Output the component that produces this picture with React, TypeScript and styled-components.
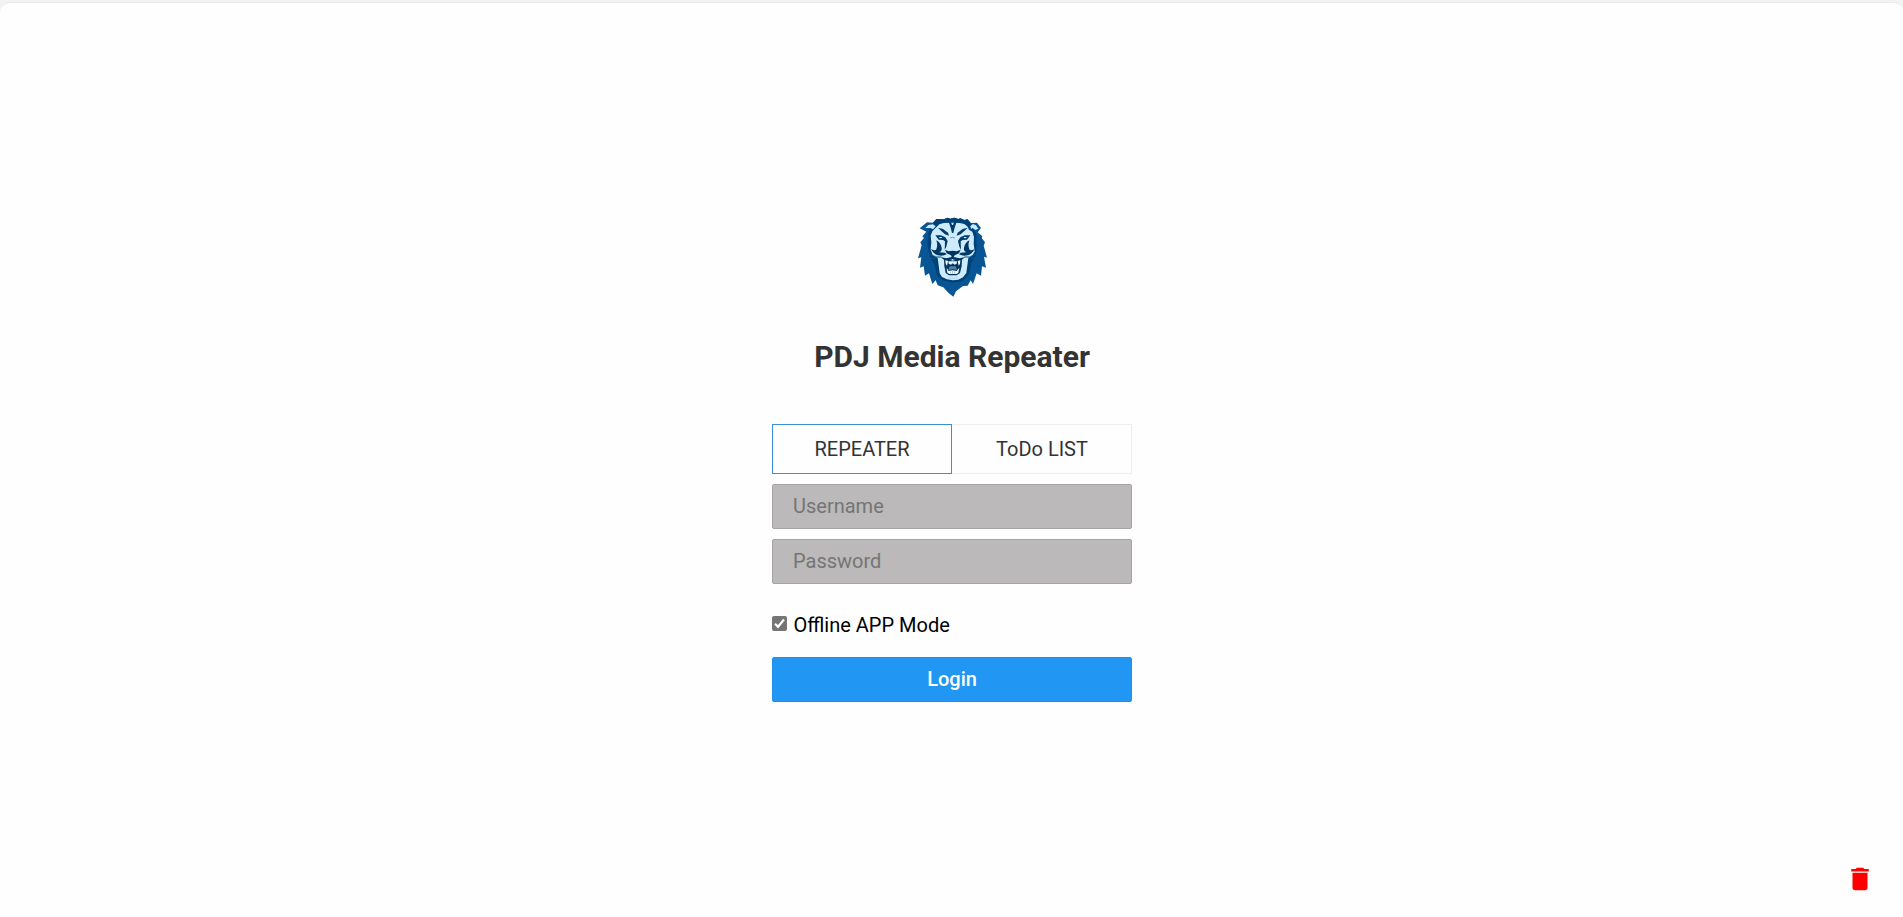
import React, { useState } from 'react';
import styled, { createGlobalStyle } from 'styled-components';

const GlobalStyle = createGlobalStyle`
  * { box-sizing: border-box; }
  body { margin: 0; background: #f3f3f3; font-family: Roboto, "Liberation Sans", sans-serif; }
`;

const Page = styled.main`
  height: 100vh;
  padding-top: 2px;
  overflow: hidden;
`;

const Card = styled.section`
  height: 100%;
  display: flex;
  flex-direction: column;
  align-items: center;
  padding: 202px 0 0;
  margin-right: -1px;
  padding-right: 1px;
  background: #fefefe;
  border-top: 1px solid #ebebeb;
  border-radius: 10px 10px 0 0;
`;

const Column = styled.form`
  width: 360px;
  margin-right: -1px;
  display: flex;
  flex-direction: column;
`;

const Logo = styled.svg`
  width: 94px;
  height: 100px;
  align-self: center;
`;

const Title = styled.h1`
  margin: 34px 0 0;
  height: 35px;
  font-size: 30px;
  line-height: 35px;
  font-weight: 700;
  color: #333;
  text-align: center;
`;

const Tabs = styled.div`
  display: flex;
  margin: 50px 0 10px;
`;

const Tab = styled.button<{ $active: boolean }>`
  flex: 1;
  height: 50px;
  padding: 0;
  border: 1px solid ${(p) => (p.$active ? '#3a8fd0' : '#eee')};
  ${(p) => !p.$active && 'border-left-color: transparent;'}
  background: transparent;
  color: #333;
  font: 400 20px/24px Roboto, sans-serif;
`;

const Field = styled.input`
  height: 45px;
  margin-bottom: 10px;
  padding: 0 20px 1.6px;
  border: 1px solid #a5a4a4;
  border-radius: 2px;
  background: #bbb9ba;
  color: #333;
  font: 400 20px/24px Roboto, sans-serif;
  outline: none;
  &::placeholder { color: #757575; }
`;

const Option = styled.label`
  display: flex;
  align-items: flex-start;
  height: 35px;
  margin: 20px 0 8px;
  padding-top: 2px;
  color: #000;
  font-size: 20px;
  line-height: 19px;
`;

const Check = styled.button<{ $on: boolean }>`
  width: 15px;
  height: 15px;
  margin: 0 6.5px 0 0;
  padding: 0;
  border: 0;
  border-radius: 2px;
  background: ${(p) => (p.$on ? '#757575' : '#ccc')};
  display: flex;
`;

const Submit = styled.button`
  height: 45px;
  padding: 0 0 1.6px;
  border: 1px solid #2190ec;
  border-radius: 2px;
  background: #2196f3;
  color: #fff;
  font: 500 20px/24px Roboto, sans-serif;
`;

const Trash = styled.button`
  position: fixed;
  right: 28px;
  bottom: 23px;
  width: 30px;
  height: 30px;
  padding: 0;
  border: 0;
  background: none;
  color: #f00;
  svg { display: block; }
`;

const Lion = () => (
  <Logo viewBox="0 0 282 300" aria-label="Lion">
    <path
      fill="#075594"
      d="M44 70L66 52L83 53L94 42L116 43L128 38L136 41L148 38L160 42L166 40L178 45L188 43L198 54L216 53L228 69L218 82L232 94L230 99L240 112L236 122L246 158L237 155L243 188L231 184L228 212L215 205L204 237L197 226L188 242L174 243L153 259L145 275L130 263L115 247L98 241L92 226L82 237L72 205L60 212L56 184L45 188L49 157L39 160L50 121L46 112L57 99L52 94L64 80Z"
    />
    <path
      fill="#004278"
      d="M76 66L94 42L116 43L128 38L136 41L148 38L160 42L166 40L178 45L188 43L200 62L214 86L215 116L213 150L200 171L192 208L173 228L145 233L112 226L97 212L88 178L74 154L67 116L70 84Z"
    />
    <path fill="#c9e9fb" d="M61 69L70 60L84 58L92 64L84 73L76 69Z" />
    <path fill="#c9e9fb" d="M196 63L204 57L213 61L220 71L211 75L203 69L198 72Z" />
    <path
      fill="#cdebfb"
      d="M94 67L103 58L116 54L142 53L164 54L178 57L188 65L192 74L202 80L207 96L206 116L209 140L202 151L190 158L184 204L174 217L160 224L143 226L126 223L111 216L104 205L98 158L83 150L77 134L79 112L77 92L82 79Z"
    />
    <path fill="#003c69" d="M131 50L138 52L141 60L144 60L147 52L155 50L149 68L145 84L141 84L137 68Z" />
    <path fill="#003c69" d="M99 68L114 72L129 83L132 92L120 88L109 78ZM188 68L173 72L158 83L155 92L167 88L178 78Z" />
    <path
      fill="#003c69"
      d="M91 91L108 91L121 97L128 108L124 125L119 134L120 109L114 105L101 104ZM196 91L179 91L166 97L159 108L163 125L168 134L167 109L173 105L186 104Z"
    />
    <path fill="#d2edfd" d="M101 96L111 96L110 99L105 100ZM186 96L176 96L177 99L182 100Z" />
    <path
      fill="#003865"
      d="M94 106Q107 113 110 128Q112 139 103 142L120 143L125 148Q113 155 99 151Q85 147 78 132Q91 139 94 133Q99 121 94 106ZM193 106Q180 113 177 128Q175 139 184 142L167 143L162 148Q174 155 188 151Q202 147 209 132Q196 139 193 133Q188 121 193 106Z"
    />
    <path
      fill="#00345f"
      d="M120 134L131 139L143 137L155 139L167 134L162 145L149 151L146 156L164 160L181 156L169 166L146 164L143 162L139 164L119 166L106 156L124 160L140 156L138 151L125 145Z"
    />
    <path fill="none" stroke="#3b7eaa" strokeWidth="2" d="M135 99L142 97L150 99" />
    <path
      fill="none"
      stroke="#1b6293"
      strokeWidth="1.8"
      d="M69 147L90 154L108 155M72 160L91 159L110 156M217 147L197 154L179 155M214 160L196 159L177 156"
    />
    <path fill="#00365f" d="M117 164L127 162L143 167L159 162L171 164L170 184L165 204L155 211L132 211L122 204L118 184Z" />
    <path fill="#fff" d="M121 166L129 168L126 182L122 176ZM166 166L158 168L161 182L165 176Z" />
    <path fill="#e5f5ff" d="M130 169L156 169L155 176L149 179L143 175L138 179L131 176Z" />
    <path fill="#527fa6" d="M134 184L152 184L156 195L143 193L130 195Z" />
    <path fill="#f5fbff" d="M125 188L131 198L143 196L155 198L163 188L160 204L154 207L133 207L127 203Z" />
    <path fill="none" stroke="#39739a" strokeWidth="1.2" d="M137 199L137 206M143 198L143 206M149 199L149 206" />
    <path fill="none" stroke="#8cbcda" strokeWidth="1.5" d="M129 218L143 220L158 218" />
  </Logo>
);

export default function App() {
  const [tab, setTab] = useState(0);
  const [offline, setOffline] = useState(true);
  return (
    <>
      <GlobalStyle />
      <Page>
        <Card>
          <Column onSubmit={(e) => e.preventDefault()}>
            <Lion />
            <Title>PDJ Media Repeater</Title>
            <Tabs>
              {['REPEATER', 'ToDo LIST'].map((name, i) => (
                <Tab key={name} type="button" $active={tab === i} onClick={() => setTab(i)}>
                  {name}
                </Tab>
              ))}
            </Tabs>
            <Field placeholder="Username" />
            <Field placeholder="Password" type="password" />
            <Option>
              <Check
                type="button"
                role="checkbox"
                aria-checked={offline}
                aria-label="Offline APP Mode"
                $on={offline}
                onClick={() => setOffline(!offline)}
              >
                {offline && (
                  <svg width="15" height="15" viewBox="0 0 15 15">
                    <path d="M3 7.8L6 10.8L12 3.5" fill="none" stroke="#fff" strokeWidth="2.2" />
                  </svg>
                )}
              </Check>
              Offline APP Mode
            </Option>
            <Submit type="submit">Login</Submit>
          </Column>
        </Card>
        <Trash aria-label="Delete">
          <svg width="30" height="30" viewBox="0 0 24 24" fill="currentColor">
            <path d="M6 19c0 1.1.9 2 2 2h8c1.1 0 2-.9 2-2V7H6v12zM19 4h-3.5l-1-1h-5l-1 1H5v2h14V4z" />
          </svg>
        </Trash>
      </Page>
    </>
  );
}
